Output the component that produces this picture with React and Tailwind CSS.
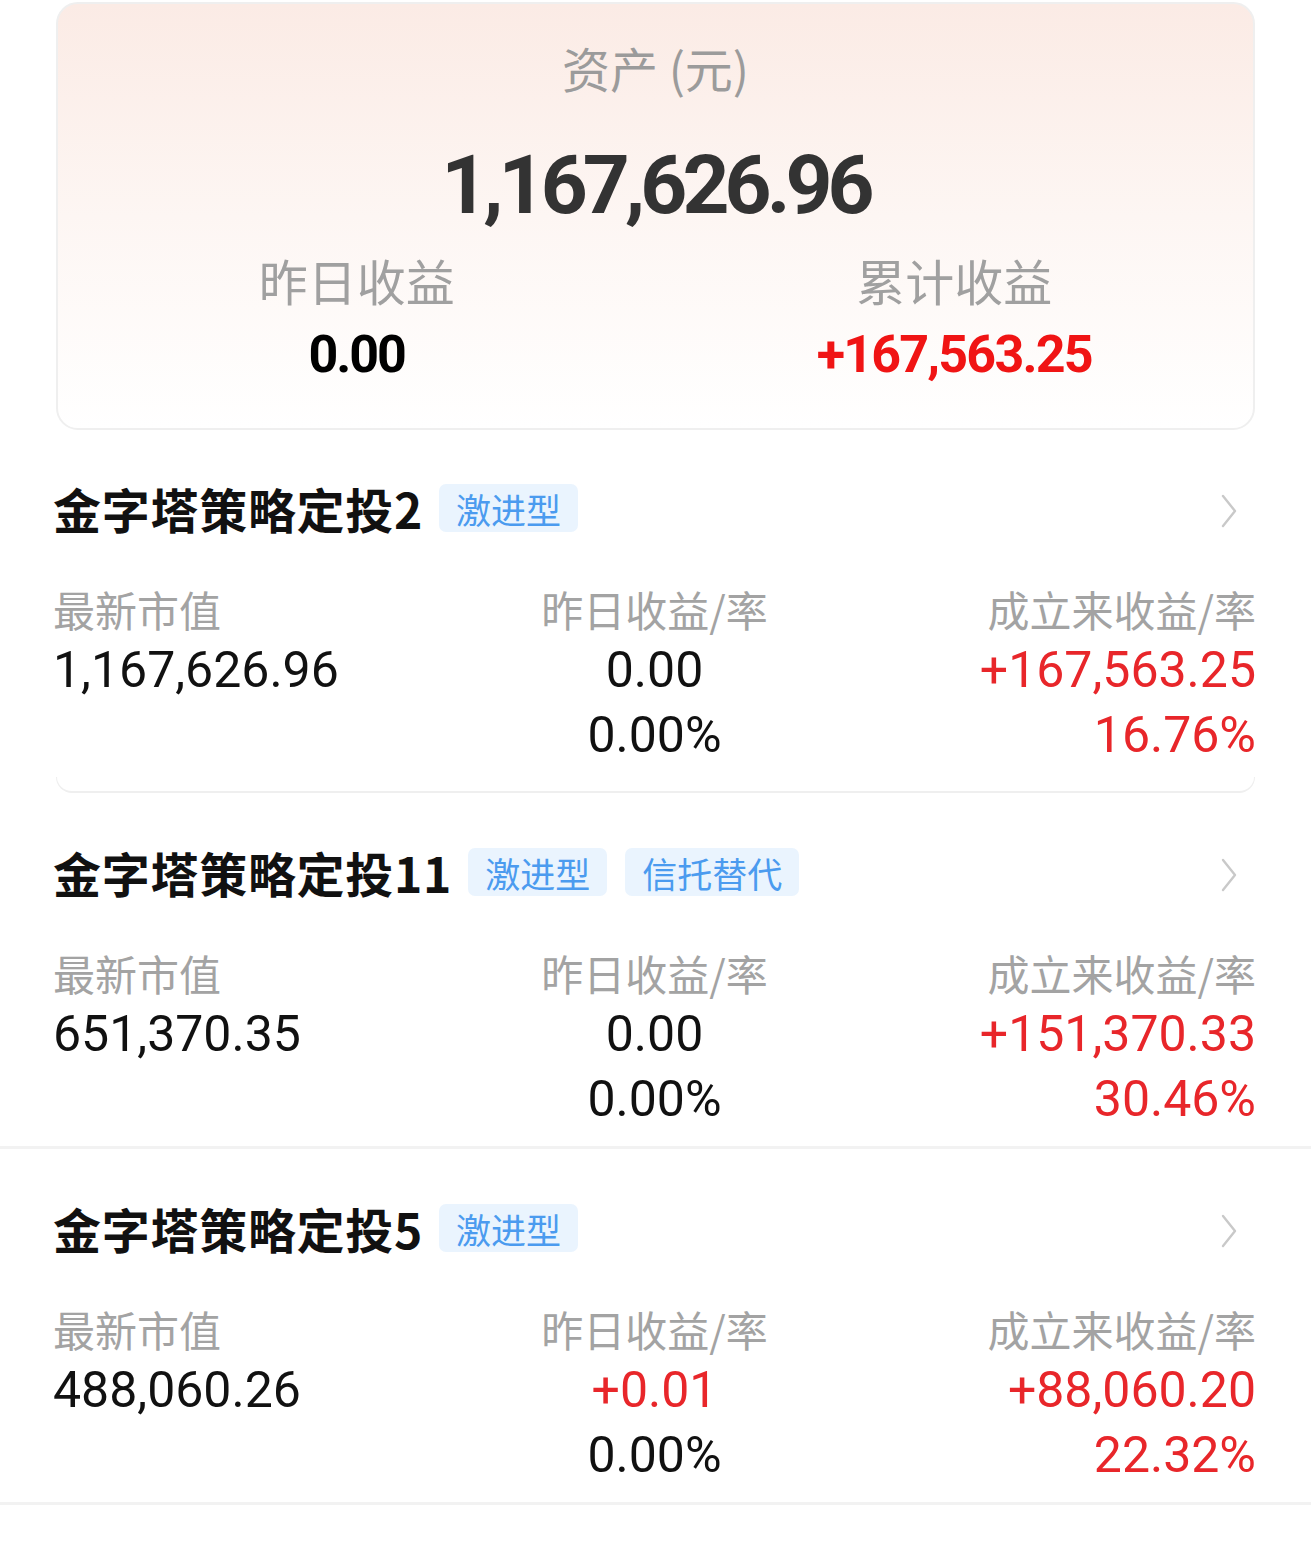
// App.jsx - 资产概览 + 策略定投列表
import React from 'react';

const cjk = "font-['Noto_Sans_CJK_SC',sans-serif]";
const num = "font-['Roboto','Noto_Sans_CJK_SC',sans-serif]";

const products = [
  {
    name: '金字塔策略定投2',
    tags: ['激进型'],
    value: '1,167,626.96',
    dayGain: '0.00',
    dayGainRed: false,
    dayRate: '0.00%',
    totalGain: '+167,563.25',
    totalRate: '16.76%',
    edge: 'card',
  },
  {
    name: '金字塔策略定投11',
    tags: ['激进型', '信托替代'],
    value: '651,370.35',
    dayGain: '0.00',
    dayGainRed: false,
    dayRate: '0.00%',
    totalGain: '+151,370.33',
    totalRate: '30.46%',
    edge: 'line',
  },
  {
    name: '金字塔策略定投5',
    tags: ['激进型'],
    value: '488,060.26',
    dayGain: '+0.01',
    dayGainRed: true,
    dayRate: '0.00%',
    totalGain: '+88,060.20',
    totalRate: '22.32%',
    edge: 'line',
  },
];

const Chevron = () => (
  <svg width="22" height="36" viewBox="0 0 22 36" fill="none" className="mr-[16px] mt-[6px]">
    <path d="M5 3 L17 18 L5 33" stroke="#c9c9c9" strokeWidth="2.4" strokeLinecap="round" strokeLinejoin="round" />
  </svg>
);

const ProductItem = ({ p }) => (
  <div>
    <div className="px-[53px] pr-[55px]">
      {/* title row */}
      <div className="flex items-center h-[48px]">
        <span className={`${cjk} text-[48px] font-bold text-[#111111] leading-none tracking-[0.015em]`}>
          {p.name}
        </span>
        <div className="flex items-center gap-[18px] ml-[16px]">
          {p.tags.map((t) => (
            <span
              key={t}
              className={`${cjk} h-[48px] px-[17px] flex items-center rounded-[7px] bg-[#eaf4fe] text-[#4b9bef] text-[35px] leading-none`}
            >
              {t}
            </span>
          ))}
        </div>
        <div className="flex-1" />
        <Chevron />
      </div>

      {/* figures */}
      <div className="grid grid-cols-3 mt-[46px]">
        <div className="flex flex-col items-start">
          <div className={`${cjk} h-[60px] flex items-center text-[42px] text-[#a3a3a3]`}>最新市值</div>
          <div className={`${num} h-[60px] pt-[4px] flex items-center text-[50px] text-[#111111]`}>{p.value}</div>
        </div>
        <div className="flex flex-col items-center">
          <div className={`${cjk} h-[60px] flex items-center text-[42px] text-[#a3a3a3]`}>昨日收益/率</div>
          <div className={`${num} h-[60px] pt-[4px] flex items-center text-[50px] ${p.dayGainRed ? 'text-[#e8262a]' : 'text-[#111111]'}`}>
            {p.dayGain}
          </div>
          <div className={`${num} h-[70px] pt-[4px] flex items-center text-[50px] text-[#111111]`}>{p.dayRate}</div>
        </div>
        <div className="flex flex-col items-end">
          <div className={`${cjk} h-[60px] flex items-center text-[42px] text-[#a3a3a3]`}>成立来收益/率</div>
          <div className={`${num} h-[60px] pt-[4px] flex items-center text-[50px] text-[#e8262a]`}>{p.totalGain}</div>
          <div className={`${num} h-[70px] pt-[4px] flex items-center text-[50px] text-[#e8262a]`}>{p.totalRate}</div>
        </div>
      </div>
    </div>

    {p.edge === 'card' ? (
      <div className="mx-[56px] mt-[9px] h-[16px] rounded-b-[16px] border-b-2 border-x border-[#efefef]" />
    ) : (
      <div className="mt-[14px] h-[3px] bg-[#f2f2f2]" />
    )}
  </div>
);

const App = () => {
  return (
    <div className="w-[1311px] min-h-[1545px] bg-white">
      {/* asset summary card */}
      <div className="pt-[2px] px-[56px]">
        <div className="rounded-[22px] border-2 border-[#efefef] bg-gradient-to-b from-[#fbebe5] via-[#fdf6f3] to-white pt-[33px] pb-[38px]">
          <div className={`${cjk} h-[60px] flex items-center justify-center text-[48px] text-[#9b9b9b]`}>资产 (元)</div>
          <div className="h-[100px] mt-[38px] flex items-center justify-center">
            <span className={`${num} text-[82px] font-bold text-[#333333] tracking-[-0.06em] leading-none`}>
              1,167,626.96
            </span>
          </div>
          <div className="grid grid-cols-2 mt-[15px]">
            <div className="flex flex-col items-center">
              <div className={`${cjk} h-[60px] flex items-center text-[49px] text-[#a0a0a0]`}>昨日收益</div>
              <div className={`${num} h-[70px] mt-[10px] flex items-center text-[52px] font-bold text-black tracking-[-0.04em]`}>
                0.00
              </div>
            </div>
            <div className="flex flex-col items-center">
              <div className={`${cjk} h-[60px] flex items-center text-[49px] text-[#a0a0a0]`}>累计收益</div>
              <div className={`${num} h-[70px] mt-[10px] flex items-center text-[52px] font-bold text-[#f01414] tracking-[-0.035em]`}>
                +167,563.25
              </div>
            </div>
          </div>
        </div>
      </div>

      {/* product list */}
      <div className="pt-[54px]">
        {products.map((p, i) => (
          <div key={p.name} className={i === 0 ? '' : 'pt-[55px]'}>
            <ProductItem p={p} />
          </div>
        ))}
      </div>
    </div>
  );
};

export default App;
